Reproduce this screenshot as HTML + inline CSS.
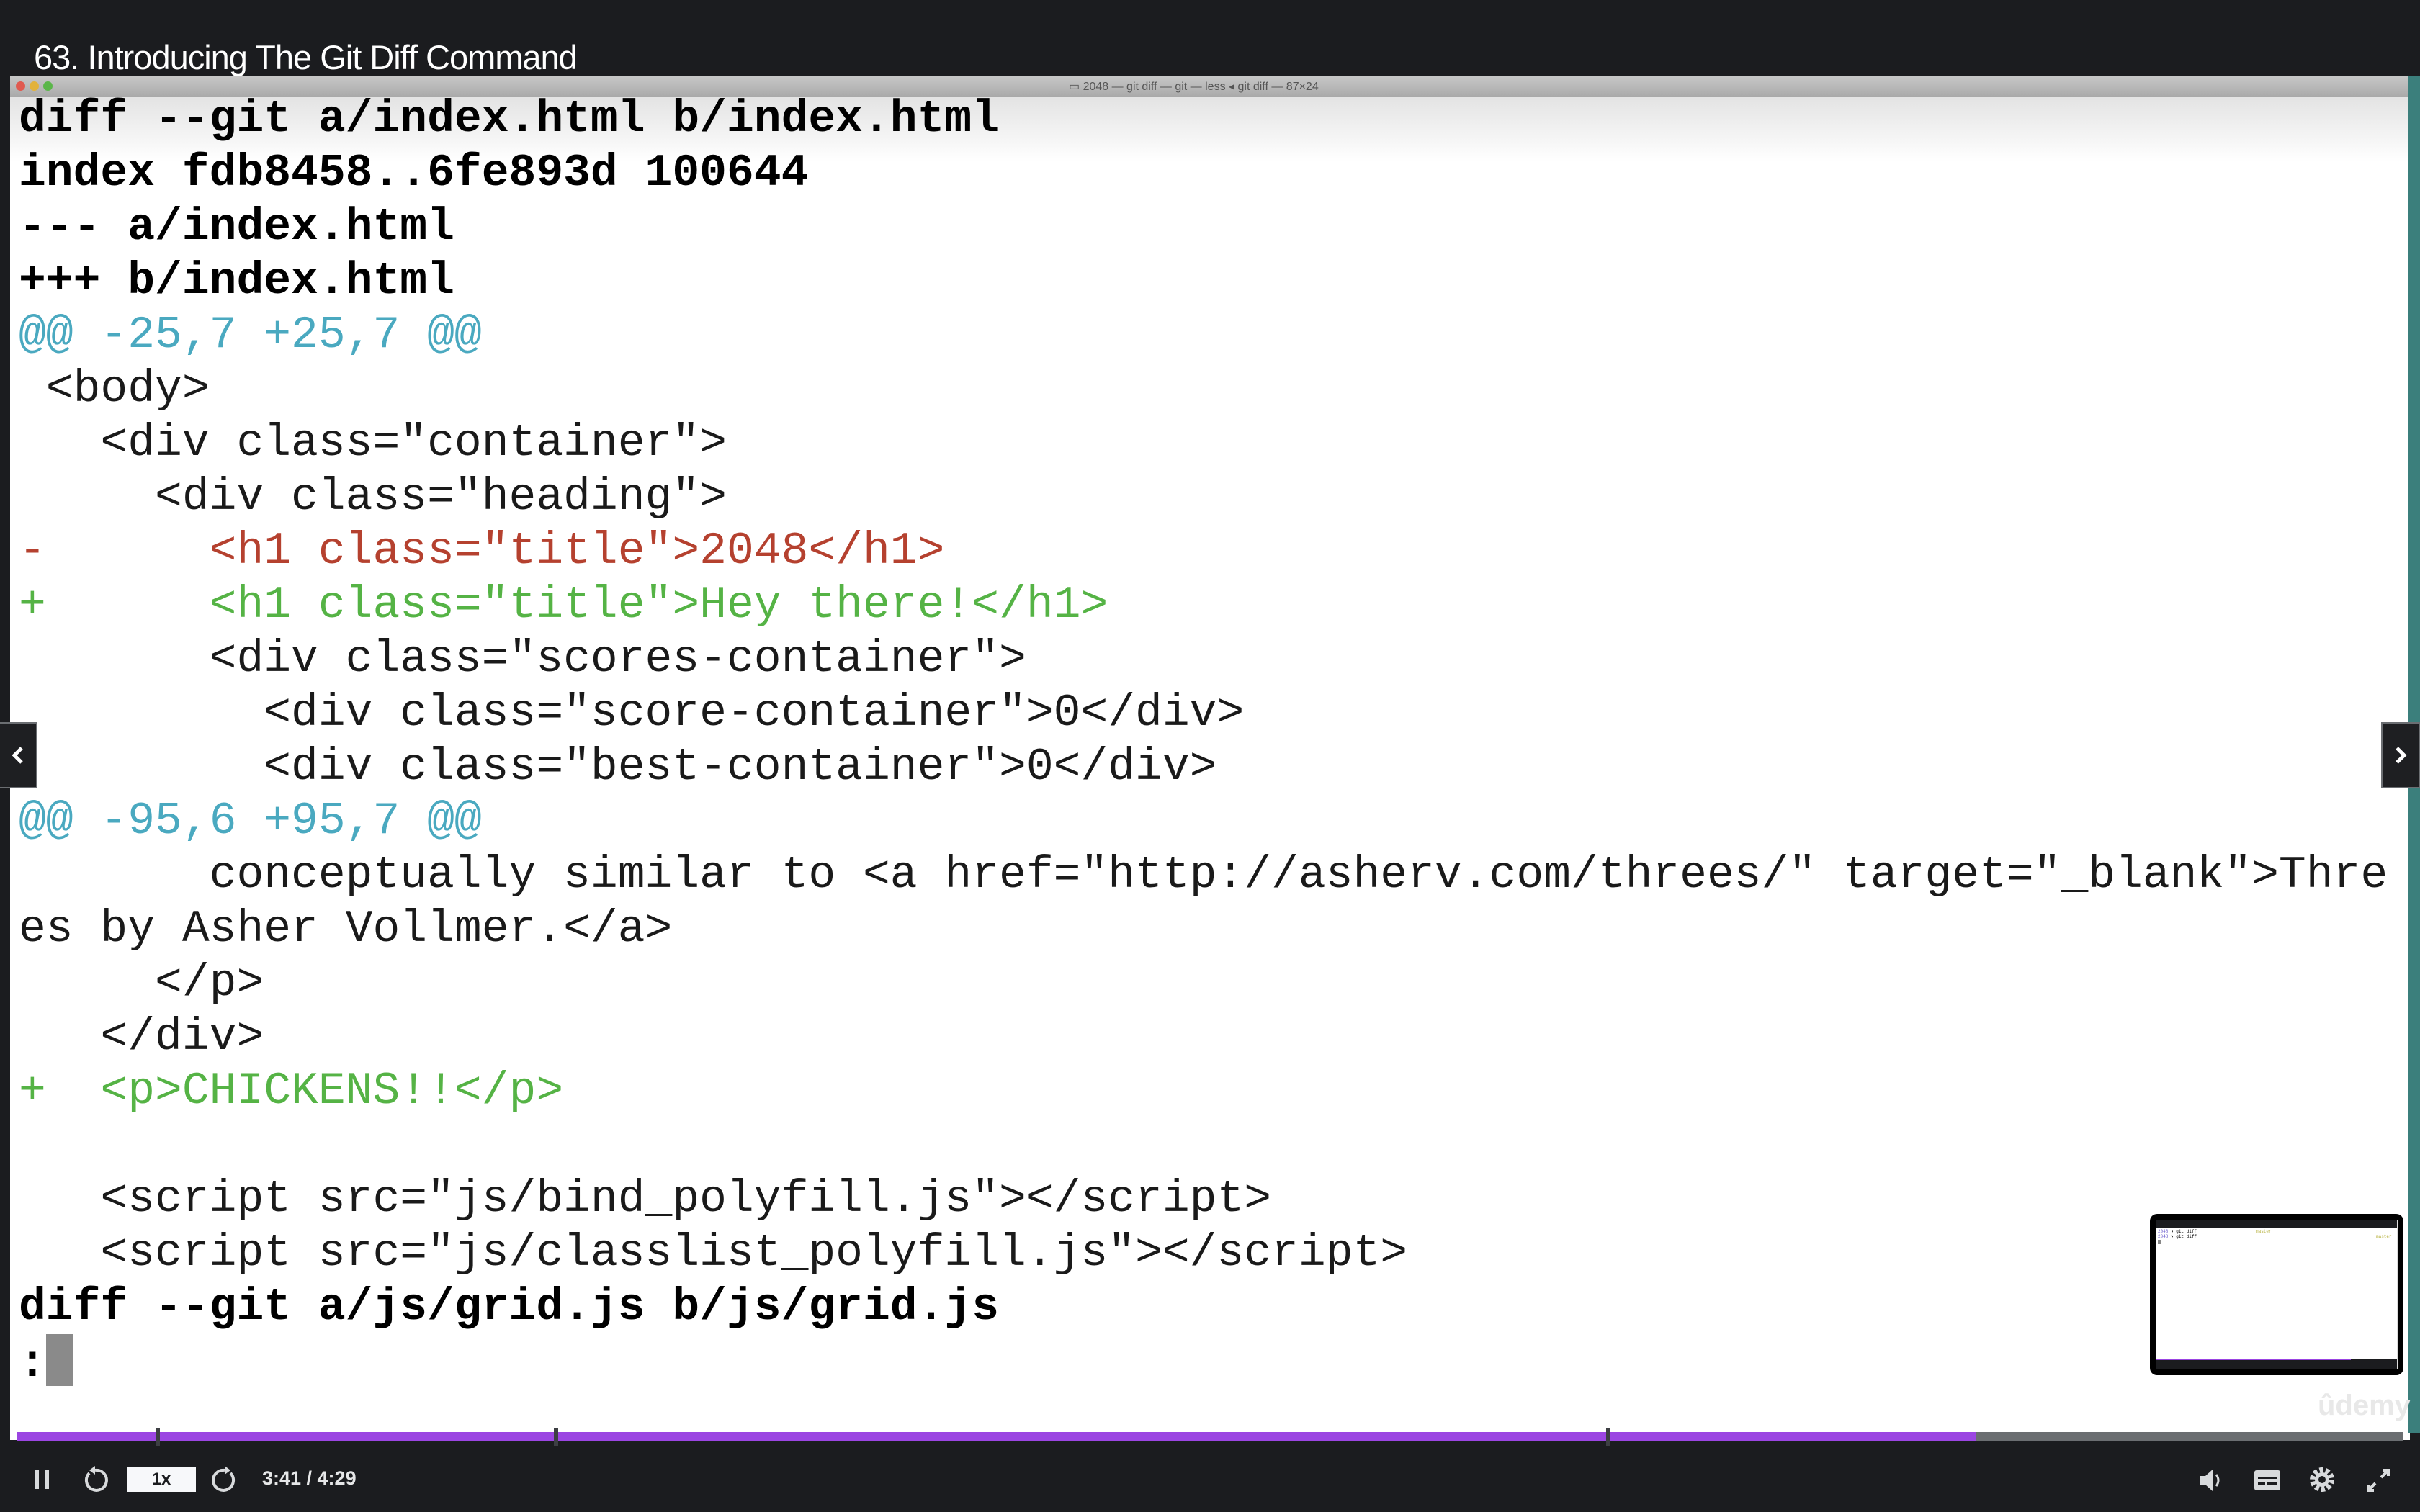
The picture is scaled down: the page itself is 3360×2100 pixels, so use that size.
<!DOCTYPE html>
<html><head><meta charset="utf-8"><style>
*{margin:0;padding:0;box-sizing:border-box}
body{width:3360px;height:2100px;background:#1b1c1f;position:relative;overflow:hidden;font-family:"Liberation Sans",sans-serif}
#title{position:absolute;left:47px;top:52px;color:#fff;font-size:47px;letter-spacing:-1px}
#win{position:absolute;left:14px;top:105px;width:3332px;height:1895px;background:#fff;overflow:hidden}
#tb{position:absolute;left:0;top:0;width:100%;height:30px;background:linear-gradient(#c8c8c8,#a9a9a9)}
#tb .d{position:absolute;top:8px;width:13px;height:13px;border-radius:50%}
#tb .t{position:absolute;left:1470px;top:5px;font-size:16px;color:#555}
#fade{position:absolute;left:0;top:30px;width:100%;height:90px;background:linear-gradient(rgba(200,200,200,.5),rgba(255,255,255,0))}
#term{position:absolute;left:12px;top:23px;font-family:"Liberation Mono",monospace;font-size:63px;line-height:75px;white-space:pre;color:#1a1a1a}
.b{font-weight:bold;color:#000}.c{color:#4aa9c0}.r{color:#b5412f}.g{color:#55b345}
.cur{display:inline-block;width:38px;height:72px;background:#8a8a8a;vertical-align:-14px}
#teal{position:absolute;left:3343px;top:105px;width:17px;height:1885px;background:#3b7f7c}
.arr{position:absolute;top:1003px;width:54px;height:92px;background:#1e1f22;border:2px solid #6b6e72}
#prog{position:absolute;left:24px;top:1989px;width:3312px;height:13px;background:#6b6e71}
#prog i{position:absolute;left:0;top:0;width:2720px;height:13px;background:#9b45e2}
.mk{position:absolute;top:1984px;width:6px;height:24px;background:#3d3f43}
#ctl{position:absolute;top:2030px;left:0;width:100%;height:50px;color:#d8dadc}
#thumb{position:absolute;left:2985px;top:1686px;width:352px;height:224px;background:#000;border-radius:10px}
#thumb .in{position:absolute;left:8px;top:8px;width:336px;height:208px;background:#fff;border:1px solid #ddd;overflow:hidden;font-family:"Liberation Mono",monospace;font-size:6px;line-height:7px}
#ud{position:absolute;left:3218px;top:1930px;font-size:40px;color:#e8e8e8;font-weight:bold}
</style></head><body>
<div id="title">63. Introducing The Git Diff Command</div>
<div id="win">
<div id="tb"><span class="d" style="left:8px;background:#e05a50"></span><span class="d" style="left:27px;background:#e2b23b"></span><span class="d" style="left:46px;background:#5ab649"></span><span class="t">▭ 2048 — git diff — git — less ◂ git diff — 87×24</span></div>
<div id="fade"></div>
<div id="term"><span class="b">diff --git a/index.html b/index.html</span>
<span class="b">index fdb8458..6fe893d 100644</span>
<span class="b">--- a/index.html</span>
<span class="b">+++ b/index.html</span>
<span class="c">@@ -25,7 +25,7 @@</span>
 &lt;body&gt;
   &lt;div class="container"&gt;
     &lt;div class="heading"&gt;
<span class="r">-      &lt;h1 class="title"&gt;2048&lt;/h1&gt;</span>
<span class="g">+      &lt;h1 class="title"&gt;Hey there!&lt;/h1&gt;</span>
       &lt;div class="scores-container"&gt;
         &lt;div class="score-container"&gt;0&lt;/div&gt;
         &lt;div class="best-container"&gt;0&lt;/div&gt;
<span class="c">@@ -95,6 +95,7 @@</span>
       conceptually similar to &lt;a href="http://asherv.com/threes/" target="_blank"&gt;Thre
es by Asher Vollmer.&lt;/a&gt;
     &lt;/p&gt;
   &lt;/div&gt;
<span class="g">+  &lt;p&gt;CHICKENS!!&lt;/p&gt;</span>

   &lt;script src="js/bind_polyfill.js"&gt;&lt;/script&gt;
   &lt;script src="js/classlist_polyfill.js"&gt;&lt;/script&gt;
<span class="b">diff --git a/js/grid.js b/js/grid.js</span>
<span class="b">:</span><span class="cur"></span></div>
</div>
<div id="teal"></div>
<div class="arr" style="left:-2px"><svg width="50" height="88"><path d="M30 34 L20 44 L30 54" stroke="#fff" stroke-width="5" fill="none"/></svg></div>
<div class="arr" style="left:3306px"><svg width="50" height="88"><path d="M20 34 L30 44 L20 54" stroke="#fff" stroke-width="5" fill="none"/></svg></div>
<div id="thumb"><div class="in">
<div style="position:absolute;left:0;top:0;width:100%;height:10px;background:#1b1c1f"></div>
<div style="position:absolute;left:2px;top:12px"><span style="color:#6a5acd">2048</span> ❯ git diff</div>
<div style="position:absolute;left:138px;top:12px;color:#b5b03a">master</div>
<div style="position:absolute;left:2px;top:19px"><span style="color:#6a5acd">2048</span> ❯ git diff</div>
<div style="position:absolute;left:305px;top:19px;color:#b5b03a">master</div>
<div style="position:absolute;left:2px;top:27px;width:4px;height:6px;background:#888"></div>
<div style="position:absolute;left:0;top:193px;width:100%;height:15px;background:#1b1c1f"></div>
<div style="position:absolute;left:0;top:192px;width:270px;height:2px;background:#9b45e2"></div>
</div></div>
<div id="ud">ûdemy</div>
<div id="prog"><i></i></div>
<div class="mk" style="left:216px"></div><div class="mk" style="left:769px"></div><div class="mk" style="left:2230px"></div>
<div id="ctl">
<svg style="position:absolute;left:44px;top:10px" width="30" height="30"><rect x="4" y="2" width="6" height="26" fill="#d8dadc"/><rect x="18" y="2" width="6" height="26" fill="#d8dadc"/></svg>
<svg style="position:absolute;left:112px;top:6px" width="40" height="40"><path d="M12 10 A14 14 0 1 0 20 6" stroke="#d8dadc" stroke-width="4" fill="none"/><path d="M20 0 L20 12 L12 6Z" fill="#d8dadc"/></svg>
<div style="position:absolute;left:176px;top:8px;width:96px;height:34px;background:#f7f8fa;color:#1b1c1f;font-size:24px;font-weight:bold;text-align:center;line-height:34px">1x</div>
<svg style="position:absolute;left:292px;top:6px" width="40" height="40"><path d="M28 10 A14 14 0 1 1 20 6" stroke="#d8dadc" stroke-width="4" fill="none"/><path d="M20 0 L20 12 L28 6Z" fill="#d8dadc"/></svg>
<div style="position:absolute;left:364px;top:8px;font-size:27px;font-weight:bold;color:#e6e7e8">3:41 / 4:29</div>
<svg style="position:absolute;left:3050px;top:6px" width="40" height="40"><path d="M4 14 H12 L22 5 V35 L12 26 H4Z" fill="#d8dadc"/><path d="M27 12 Q33 20 27 28" stroke="#d8dadc" stroke-width="3" fill="none"/></svg>
<svg style="position:absolute;left:3128px;top:8px" width="40" height="36"><rect x="2" y="4" width="36" height="28" rx="3" fill="#d8dadc"/><rect x="7" y="20" width="10" height="4" fill="#1b1c1f"/><rect x="20" y="20" width="13" height="4" fill="#1b1c1f"/><rect x="7" y="13" width="26" height="3" fill="#1b1c1f"/></svg>
<svg style="position:absolute;left:3204px;top:5px" width="40" height="40"><circle cx="20" cy="20" r="13" fill="none" stroke="#d8dadc" stroke-width="8" stroke-dasharray="5 3.2"/><circle cx="20" cy="20" r="10" fill="#d8dadc"/><circle cx="20" cy="20" r="5" fill="#1b1c1f"/></svg>
<svg style="position:absolute;left:3282px;top:6px" width="40" height="40"><path d="M6 34 L16 24 M6 26 V34 H14 M34 6 L24 16 M34 14 V6 H26" stroke="#d8dadc" stroke-width="4" fill="none"/></svg>
</div>
</body></html>
